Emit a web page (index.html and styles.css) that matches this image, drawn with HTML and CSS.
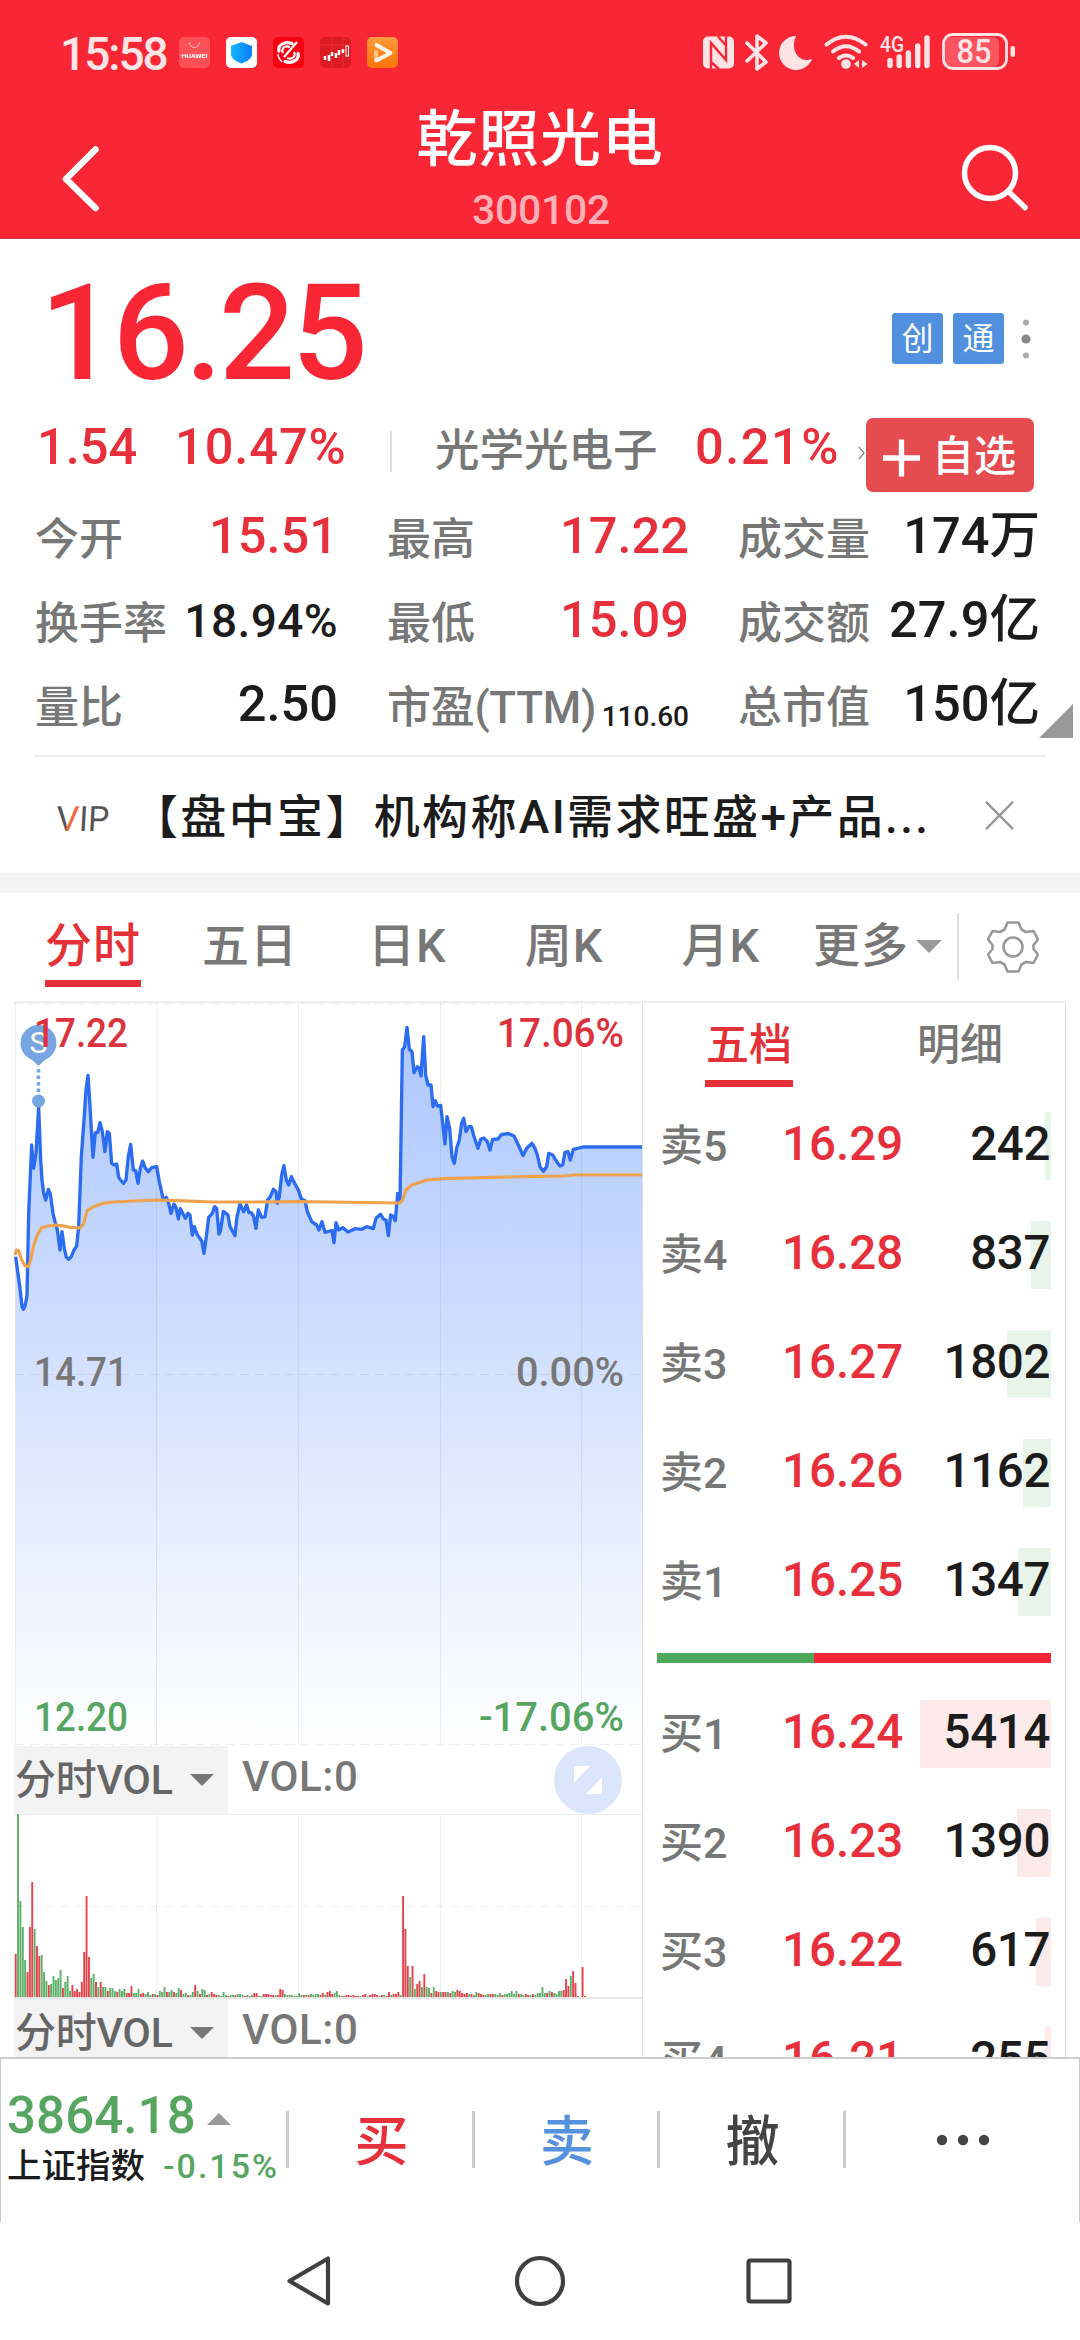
FILE: index.html
```html
<!DOCTYPE html>
<html lang="zh-CN">
<head>
<meta charset="utf-8">
<title>乾照光电 300102</title>
<link rel="stylesheet" href="styles.css">
</head>
<body>
<header class="header">
  <div class="status">
    <span class="clock">15:58</span>
    <div class="apps">
      <svg class="app" viewBox="0 0 31 31"><rect width="31" height="31" rx="5" fill="#ff5058"/><path d="M10.500 5.500a5 5 0 0 0 10 0" fill="none" stroke="#ffc0c0" stroke-width="1"/><text x="2.500" y="20.500" font-size="6" font-weight="700" fill="#fff" textLength="26" lengthAdjust="spacingAndGlyphs">HUAWEI</text></svg>
      <svg class="app" viewBox="0 0 31 31"><defs><linearGradient id="shield" x1="0" x2="1"><stop offset="0" stop-color="#14b4ff"/><stop offset="1" stop-color="#0a80fb"/></linearGradient></defs><rect width="31" height="31" rx="5" fill="#fff"/><path d="M15.500 5l10.500 4v8c0 4.500-5 7.500-10.500 9.500C10 24.500 5 21.500 5 17V9z" fill="url(#shield)"/></svg>
      <svg class="app" viewBox="0 0 31 31"><rect width="31" height="31" rx="5" fill="#f60012"/><path d="M19 6.500C11 3.500 4.500 9 6 14M12 24.500c8 3 14.500-2.500 13-8" fill="none" stroke="#fff" stroke-width="3.200" stroke-linecap="round"/><path d="M17 10c-6-2-9 2-7 6M14 21c6 2 9-2 7-6M24 5L11 20" fill="none" stroke="#fff" stroke-width="2.200"/><path d="M5 17c0 4 2 6 4 8" fill="none" stroke="#fff" stroke-width="1.500"/></svg>
      <svg class="app" viewBox="0 0 31 31"><rect width="31" height="31" rx="5" fill="#dc1c22"/><path d="M0 8h31M12 0v31M23 0v31" stroke="#e8343a" stroke-width=".8"/><path d="M5 19v4M9 18v6M12 15v4M16 16v5M19 13v5M23 12v4" stroke="#fff" stroke-width="2.500"/><rect x="26" y="9" width="2.500" height="10" fill="none" stroke="#fff"/></svg>
      <svg class="app" viewBox="0 0 31 31"><defs><linearGradient id="player" x2="0" y2="1"><stop offset="0" stop-color="#ff9a3e"/><stop offset="1" stop-color="#ff7408"/></linearGradient></defs><rect width="31" height="31" rx="5" fill="url(#player)"/><path d="M9 23V15" stroke="#ffc48a" stroke-width="4" stroke-linecap="round"/><path d="M9.500 8l14 8-14 7.500" fill="none" stroke="#fff4e6" stroke-width="4" stroke-linecap="round" stroke-linejoin="round"/></svg>
    </div>
    <svg class="system" viewBox="700 30 320 44" fill="#ffe4e6">
      <rect x="703" y="36.500" width="31" height="32" rx="5"/>
      <path d="M711 69V43l15 17V36M718 36.500l8 9M711 62l8 7M726 60l-8-9" fill="none" stroke="#f92735" stroke-width="2.400"/>
      <path d="M747 43l19 19-9 7V36l9 7-19 18" fill="none" stroke="#ffe4e6" stroke-width="3.600" stroke-linejoin="round" stroke-linecap="round"/>
      <path d="M796 36a17 17 0 1 0 16 23c-14 5-22-10-16-23z"/>
      <g fill="none" stroke="#ffe4e6" stroke-width="4" stroke-linecap="round"><path d="M826.500 44.500q19.500-15.500 39 0M833 51.500q13-10.500 26 0M839 58q7-5 14 0"/></g>
      <circle cx="846" cy="64" r="4.800"/>
      <path d="M859 60v8l-5-4zM862 60v8l5.500-4z"/>
      <text x="880" y="51.500" font-size="22" font-weight="500" textLength="24" lengthAdjust="spacingAndGlyphs">4G</text>
      <path d="M890 60.500v5M899.200 57v8.500M908.400 53v12.500M917.700 46v19.500M927 38v27.500" stroke="#ffe4e6" stroke-width="5.400" stroke-linecap="round"/>
      <rect x="945" y="37" width="54" height="30" rx="6" fill="#fb5460"/>
      <rect x="943.500" y="34.500" width="63" height="34" rx="9" fill="none" stroke="#ffe4e6" stroke-width="2.800"/>
      <rect x="1010.500" y="46" width="4.500" height="11" rx="2"/>
      <text x="956.500" y="63" font-size="33" font-weight="500" textLength="35" lengthAdjust="spacingAndGlyphs">85</text>
    </svg>
  </div>
  <div class="navbar">
    <svg class="nav-icon" viewBox="0 0 70 70"><path d="M45.500 5.500L16 35l29.500 29" fill="none" stroke="#fff" stroke-width="6.500" stroke-linecap="round" stroke-linejoin="round"/></svg>
    <div class="title">
      <h1>乾照光电</h1>
      <span class="code">300102</span>
    </div>
    <svg class="nav-icon" viewBox="0 0 70 70"><g fill="none" stroke="#fff" stroke-width="5.500" stroke-linecap="round"><circle cx="30" cy="29" r="25.500"/><path d="M49 48l16 15.500"/></g></svg>
  </div>
</header>

<section class="quote">
  <div class="price-row">
    <span class="price">16.25</span>
    <div class="marks"><span class="chip">创</span><span class="chip">通</span><svg class="dots" viewBox="0 0 12 44"><circle cx="6" cy="5.500" r="3" fill="#aaa"/><circle cx="6" cy="22" r="4.600" fill="#888"/><circle cx="6" cy="38.500" r="3" fill="#aaa"/></svg></div>
  </div>
  <div class="change-row">
    <span class="num up delta">1.54</span>
    <span class="num up percent">10.47%</span>
    <i class="rule"></i>
    <span class="sector">光学光电子</span>
    <span class="num up sector-rate">0.21%</span>
    <svg class="chev" viewBox="0 0 8 14"><path d="M1 1l5 6-5 6" fill="none" stroke="#888" stroke-width="1.300"/></svg>
    <button class="add"><svg viewBox="0 0 38 38"><path d="M19 0v38M0 19h38" stroke="#fff" stroke-width="5.500"/></svg>自选</button>
  </div>
  <dl class="stats">
    <div class="stat"><dt>今开</dt><dd class="up">15.51</dd></div>
    <div class="stat"><dt>最高</dt><dd class="up">17.22</dd></div>
    <div class="stat"><dt>成交量</dt><dd>174万</dd></div>
    <div class="stat"><dt>换手率</dt><dd class="rate">18.94%</dd></div>
    <div class="stat"><dt>最低</dt><dd class="up">15.09</dd></div>
    <div class="stat"><dt>成交额</dt><dd>27.9亿</dd></div>
    <div class="stat"><dt>量比</dt><dd>2.50</dd></div>
    <div class="stat"><dt class="ttm">市盈(TTM)</dt><dd class="tiny">110.60</dd></div>
    <div class="stat"><dt>总市值</dt><dd>150亿</dd></div>
  </dl>
  <i class="corner"></i>
  <div class="news">
    <svg class="vip" viewBox="0 0 54 30"><defs><linearGradient id="vipv" x1="0" x2="1"><stop offset=".42" stop-color="#555"/><stop offset=".5" stop-color="#ee6b3d"/></linearGradient></defs><g font-size="35" transform="skewX(-3)"><text x="1" y="27.500" fill="url(#vipv)" textLength="23" lengthAdjust="spacingAndGlyphs">V</text><text x="24" y="27.500" fill="#555" textLength="30" lengthAdjust="spacingAndGlyphs">IP</text></g></svg>
    <p class="headline">【盘中宝】机构称AI需求旺盛+产品...</p>
    <svg class="close" viewBox="0 0 30 30"><path d="M1 1l28 28M29 1L1 29" stroke="#999" stroke-width="2.600"/></svg>
  </div>
</section>

<nav class="tabs">
  <span class="tab on">分时</span><span class="tab">五日</span><span class="tab">日K</span><span class="tab">周K</span><span class="tab">月K</span>
  <span class="tab more">更多<i class="caret"></i></span>
  <i class="tab-rule"></i>
  <svg class="gear" viewBox="-26 -26 52 52"><g fill="none" stroke="#999" stroke-width="2.600" stroke-linejoin="round"><path d="M-5.500-24.500H5.500L8.500-17.500L13-15L20.500-16L25-7.500L20.500-2V2L25 7.500L20.500 16L13 15L8.500 17.500L5.500 24.500H-5.500L-8.500 17.500L-13 15L-20.500 16L-25 7.500L-20.500 2V-2L-25-7.500L-20.500-16L-13-15L-8.500-17.500Z"/><circle r="9.500"/></g></svg>
</nav>

<main class="board">
  <div class="charts">
    <svg class="minute" viewBox="14 1003 628 743">
      <defs><linearGradient id="area" gradientUnits="userSpaceOnUse" x1="0" y1="12" x2="0" y2="2235"><stop offset="0" stop-color="#a9c4fe"/><stop offset="1" stop-color="#fff"/></linearGradient></defs>
      <g transform="translate(0 1000) scale(.33333)">
        <path id="fill" fill="url(#area)"/>
        <path id="line" fill="none" stroke="#2b6cf0" stroke-width="10" stroke-linejoin="round"/>
        <path fill="none" stroke="#eda34e" stroke-width="9.500" stroke-linejoin="round" d="M45 765L50 750L56 752L65 780L75 797L85 800L92 780L100 740L112 705L125 683L145 678L165 675L185 677L210 682L240 684L250 672L262 632L280 620L310 610L340 606L400 603L470 600L530 602L640 606L760 606L900 605L990 606L1200 609L1207 600L1218 570L1235 555L1255 549L1280 540L1330 536L1450 533L1600 529L1690 528L1720 525L1926 525"/>
      </g>
      <path class="grid" d="M15.500 1003V1745M156.500 1003V1745M298.500 1003V1745M440.500 1003V1745M581.500 1003V1745"/>
      <path class="grid dash" d="M15 1003.500H642M15 1374.500H642M15 1744.500H642"/>
      <g fill="#77a5e1"><circle cx="38.500" cy="1043" r="18"/><path d="M29 1057h19l-9.500 9z"/><circle cx="38.500" cy="1101" r="6.500"/><path d="M38.500 1069v24" stroke="#77a5e1" stroke-width="3.500" stroke-dasharray="3.500 3"/></g>
      <text x="29.500" y="1053" font-size="29" fill="#fff" textLength="18" lengthAdjust="spacingAndGlyphs">S</text>
      <g font-size="41" font-weight="500">
        <text class="c-up" x="34" y="1047" textLength="94" lengthAdjust="spacingAndGlyphs">17.22</text>
        <text class="c-up" x="497" y="1047" textLength="127" lengthAdjust="spacingAndGlyphs">17.06%</text>
        <text class="c-mid" x="34" y="1386" textLength="94" lengthAdjust="spacingAndGlyphs">14.71</text>
        <text class="c-mid" x="516" y="1386" textLength="108" lengthAdjust="spacingAndGlyphs">0.00%</text>
        <text class="c-down" x="34" y="1731" textLength="94" lengthAdjust="spacingAndGlyphs">12.20</text>
        <text class="c-down" x="479" y="1731" textLength="145" lengthAdjust="spacingAndGlyphs">-17.06%</text>
      </g>
    </svg>
    <div class="strip"><span class="pick">分时VOL<i class="caret"></i></span><span class="vol">VOL:0</span>
      <svg class="expand" viewBox="0 0 68 68"><circle cx="34" cy="34" r="34" fill="#dbe5fc"/><path d="M20 20h16L20 37zM48 31v17H32z" fill="#fff"/></svg>
    </div>
    <svg class="volume" viewBox="14 1814 628 185">
      <path class="grid" d="M14 1814.500H642M156.500 1815V1997M298.500 1815V1997M440.500 1815V1997M581.500 1815V1997"/>
      <path class="grid dash" d="M15 1906.500H642"/>
      <path d="M14 1998H642" stroke="#e6e6e6" stroke-width="2"/>
      <path id="vol-up" stroke="#e2434c" stroke-width="1.900"/>
      <path id="vol-down" stroke="#5cb068" stroke-width="1.900"/>
    </svg>
    <div class="strip"><span class="pick">分时VOL<i class="caret"></i></span><span class="vol">VOL:0</span></div>
  </div>

  <aside class="book">
    <div class="book-tabs"><span class="btab on">五档</span><span class="btab">明细</span></div>
    <div class="level sell"><span>卖5</span><b>16.29</b><em><i style="width:6px"></i>242</em></div>
    <div class="level sell"><span>卖4</span><b>16.28</b><em><i style="width:20px"></i>837</em></div>
    <div class="level sell"><span>卖3</span><b>16.27</b><em><i style="width:44px"></i>1802</em></div>
    <div class="level sell"><span>卖2</span><b>16.26</b><em><i style="width:28px"></i>1162</em></div>
    <div class="level sell"><span>卖1</span><b>16.25</b><em><i style="width:33px"></i>1347</em></div>
    <div class="ratio"><i style="width:157px"></i></div>
    <div class="level buy"><span>买1</span><b>16.24</b><em><i style="width:131px"></i>5414</em></div>
    <div class="level buy"><span>买2</span><b>16.23</b><em><i style="width:34px"></i>1390</em></div>
    <div class="level buy"><span>买3</span><b>16.22</b><em><i style="width:15px"></i>617</em></div>
    <div class="level buy"><span>买4</span><b>16.21</b><em><i style="width:6px"></i>255</em></div>
  </aside>
</main>

<footer class="trade">
  <div class="index">
    <div class="index-top"><span class="index-value">3864.18</span><i class="caret-up"></i></div>
    <div class="index-sub"><span class="index-name">上证指数</span><span class="index-rate">-0.15%</span></div>
  </div>
  <span class="act buy-act">买</span>
  <span class="act sell-act">卖</span>
  <span class="act undo-act">撤</span>
  <span class="act more-act"><svg class="ellipsis" viewBox="0 0 54 12"><g fill="#444"><circle cx="6" cy="6" r="5.200"/><circle cx="27" cy="6" r="5.200"/><circle cx="48" cy="6" r="5.200"/></g></svg></span>
</footer>
<div class="sysnav">
  <svg viewBox="0 0 1080 118"><g fill="none" stroke="#404040" stroke-width="4.200" stroke-linejoin="round"><path d="M289.500 59L328 36.500V81.500Z"/><circle cx="540" cy="59" r="23"/><rect x="748.500" y="38.500" width="41" height="41" rx="2"/></g></svg>
</div>
<script src="chart.js"></script>
</body>
</html>
```
FILE: styles.css
```css
* { box-sizing: border-box; }
body {
  margin: 0;
  width: 1080px;
  height: 2340px;
  overflow: hidden;
  background: #fff;
  font-family: Roboto, "Noto Sans CJK SC", sans-serif;
  color: #1c1c1c;
}
svg { display: block; flex: none; }
i, em { font-style: normal; }
p, h1, dl, dd { margin: 0; }

.header { height: 239px; background: #f92735; border-bottom: 1px solid #c4384a; color: #fff; }
.status { display: flex; align-items: center; height: 104px; padding-left: 60px; }
.clock { width: 119px; font-size: 46px; font-weight: 500; letter-spacing: -2px; line-height: 60px; padding-top: 3px; color: #ffe4e6; }
.apps { display: flex; gap: 16px; }
.app { width: 31px; height: 31px; }
.system { width: 320px; height: 44px; margin-left: 302px; }
.navbar { display: flex; justify-content: space-between; padding: 0 50px; }
.nav-icon { width: 70px; height: 70px; margin-top: 40px; }
.title { display: flex; flex-direction: column; align-items: center; }
.title h1 { padding-top: 4px; font-size: 61px; font-weight: 500; line-height: 64px; letter-spacing: .8px; }
.code { margin: 17px 0 0 2px; font-size: 41px; font-weight: 500; line-height: 42px; letter-spacing: -.3px; color: #ffb0b6; }

.quote { position: relative; height: 634px; }
.price-row { display: flex; justify-content: space-between; height: 169px; padding: 17px 48px 0 40px; }
.price { padding-top: 2px; font-size: 134px; font-weight: 500; line-height: 152px; letter-spacing: -3.500px; color: #f92735; }
.marks { display: flex; align-items: center; height: 165px; }
.chip { width: 51px; height: 51px; margin-right: 10px; border-radius: 3px; background: #5090de; color: #fff; font-size: 32px; line-height: 53px; text-align: center; }
.dots { width: 12px; height: 44px; margin-left: 6px; }

.up { color: #e8303c; }
.num { font-size: 50.600px; font-weight: 500; line-height: 78px; }
.change-row { display: flex; align-items: center; height: 78px; padding-left: 37px; }
.delta { width: 138px; }
.percent { width: 215px; letter-spacing: .9px; }
.rule { width: 2px; height: 41px; margin-top: 9px; background: #ddd; }
.sector { margin-left: 43px; width: 260px; font-size: 44.500px; font-weight: 500; line-height: 78px; padding-top: 7px; color: #777; }
.sector-rate { width: 163px; letter-spacing: 1.500px; }
.chev { width: 8px; height: 14px; margin-top: 12px; }
.add { display: flex; flex: none; align-items: center; gap: 12px; width: 168px; height: 74px; margin: 16px 0 0; padding: 4px 0 0 17px; border: 0; border-radius: 7px; background: #e54c50; color: #fff; font: 500 42px/70px Roboto, "Noto Sans CJK SC", sans-serif; white-space: nowrap; }
.add svg { width: 37px; height: 38px; margin-top: 2px; }

.stats { display: grid; grid-template-columns: 303px 302px 302px; column-gap: 49px; padding: 8px 0 0 35px; }
.stat { display: flex; justify-content: space-between; height: 84px; line-height: 84px; white-space: nowrap; }
.stat dt { padding-top: 4px; font-size: 44px; font-weight: 500; color: #777; }
.stat dd { font-size: 50.600px; font-weight: 500; }
.stat .rate { font-size: 46px; padding-top: 1px; letter-spacing: .4px; }
.stat .ttm { letter-spacing: -.3px; }
.stat .tiny { padding-top: 13px; font-size: 28px; }
.corner { position: absolute; left: 1039px; top: 465px; border-left: 34px solid transparent; border-bottom: 34px solid #999; }
.news { display: flex; align-items: center; height: 118px; margin: 9px 34px 0; border-top: 2px solid #eee; }
.vip { width: 54px; height: 30px; margin: 6px 0 0 22px; overflow: visible; }
.headline { width: 800px; margin-left: 22px; padding-top: 4px; font-size: 46px; font-weight: 500; letter-spacing: 2.350px; line-height: 60px; white-space: nowrap; }
.close { width: 29px; height: 29px; margin-left: 53px; }

.tabs { display: flex; height: 128px; border-top: 20px solid #f4f4f4; padding-left: 45px; }
.tab { flex: none; height: 94px; margin-right: 61px; padding-top: 19px; border-bottom: 7px solid transparent; font-size: 47px; line-height: 68px; font-weight: 500; letter-spacing: 1px; color: #777; white-space: nowrap; }
.tab:nth-child(3) { margin-left: 9px; }
.tab:nth-child(3), .tab:nth-child(4) { margin-right: 78px; }
.tab:nth-child(5) { margin-right: 53px; }
.tab.on { color: #e33137; border-color: #e33137; }
.caret { display: inline-block; border: 13px solid transparent; border-bottom: 0; border-top: 13px solid #999; }
.tab.more { display: flex; align-items: center; width: 130px; margin-right: 14px; gap: 7px; }
.tab-rule { flex: none; width: 2px; height: 67px; margin: 20px 28px 0 0; background: #ddd; }
.gear { width: 52px; height: 52px; margin-top: 28px; }

.board { display: flex; width: 1052px; height: 1056px; margin: 0 14px; border-top: 2px solid #eee; overflow: hidden; }
.charts { width: 628px; flex: none; }
.minute { width: 628px; height: 743px; }
.volume { width: 628px; height: 185px; }
.grid { fill: none; stroke: rgba(40, 50, 80, .08); stroke-width: 1; }
.dash { stroke-dasharray: 9 6; }
.c-up { fill: #dc323e; }
.c-mid { fill: #777; }
.c-down { fill: #56a662; }
.strip { display: flex; height: 68px; line-height: 62px; }
.pick { display: flex; flex: none; align-items: center; gap: 17px; width: 214px; height: 68px; padding: 0 0 0 1px; background: #f3f3f3; color: #666; font-size: 41px; font-weight: 500; letter-spacing: -.2px; white-space: nowrap; }
.pick .caret { border-width: 12px 12px 0; border-color: #777 transparent; }
.vol { flex: none; margin-left: 14px; font-size: 42px; font-weight: 500; color: #777; width: 312px; letter-spacing: .6px; }
.expand { width: 68px; height: 68px; }

.book { width: 424px; height: 1056px; border: solid #ddd; border-width: 0 1px; }
.book-tabs { display: flex; height: 84px; padding-left: 62px; margin-bottom: 5px; }
.btab { flex: none; height: 84px; width: 88px; margin-right: 123px; padding-top: 10px; border-bottom: 7px solid transparent; font-size: 43px; font-weight: 500; line-height: 64px; color: #777; text-align: center; white-space: nowrap; }
.btab.on { border-color: #e33137; color: #e33137; }
.level { display: grid; grid-template-columns: 121px 125px 1fr; height: 109px; padding: 20px 14px 0 17px; line-height: 64px; }
.level span { font-size: 43px; font-weight: 500; padding-top: 2px; color: #777; }
.level b { font-size: 47.500px; font-weight: 500; padding-left: 1px; color: #e8303c; }
.level em { position: relative; height: 68px; padding-right: 1px; font-size: 47.500px; font-weight: 500; letter-spacing: -.4px; text-align: right; }
.level em i { position: absolute; z-index: -1; right: 0; top: 0; height: 68px; }
.sell em i { background: #e8f3ea; }
.buy em i { background: #fceaeb; }
.ratio { height: 10px; margin: 16px 14px 17px 14px; background: #f92735; }
.ratio i { display: block; height: 10px; background: #4fa95d; }

.trade { display: grid; grid-template-columns: 285px 186px 185px 186px 1fr; height: 165px; border: solid #ccc; border-width: 2px 1px 0; background: #fff; }
.index { padding: 25px 0 0 6px; white-space: nowrap; }
.index-top { display: flex; align-items: center; height: 62px; }
.index-value { font-size: 51px; font-weight: 500; letter-spacing: .1px; color: #56a662; width: 200px; }
.caret-up { border: 12px solid transparent; border-top: 0; border-bottom: 12px solid #999; margin-top: 8px; }
.index-sub { display: flex; align-items: center; height: 40px; line-height: 40px; }
.index-name { font-size: 34.500px; width: 156px; font-weight: 500; }
.index-rate { font-size: 34px; font-weight: 500; letter-spacing: 2px; color: #56a662; }
.act { display: flex; align-items: center; justify-content: center; height: 57px; margin-top: 52px; padding: 6px 0 0 2px; border-left: 3px solid #ccc; font-size: 54px; font-weight: 500; color: #444; line-height: 57px; }
.more-act { padding: 0; }
.buy-act { color: #e8303c; }
.sell-act { color: #5591dc; }
.ellipsis { width: 54px; height: 12px; }
.sysnav { height: 118px; background: #fff; }
.sysnav svg { width: 1080px; height: 118px; }
```
FILE: chart.js
```javascript
// Intraday price: x,y pairs in the chart group's units.
const price = "47,770 53,815 60,865 66,920 70,928 75,918 81,888 86,640 95,435 98,480 101,505 108,460 116,320 122,480 126,540 131,580 137,600 145,568 151,582 159,640 165,665 172,690 180,750 186,695 193,745 199,772 206,778 214,770 222,750 230,738 236,680 244,470 252,360 258,270 264,226 270,320 279,472 286,398 293,398 300,368 307,395 315,455 322,395 328,400 335,490 342,495 350,492 356,532 363,542 371,550 378,540 385,470 392,433 400,510 407,512 414,550 421,505 428,483 435,503 445,515 455,503 470,500 478,545 490,600 499,592 506,610 513,640 522,612 528,622 535,657 541,626 556,655 564,640 570,645 577,705 583,680 592,705 605,722 612,760 619,710 626,652 637,640 644,620 650,625 657,702 662,690 670,634 684,645 690,680 705,707 711,650 720,612 731,635 740,615 747,638 754,638 761,650 768,685 775,630 785,652 795,650 803,600 811,590 820,568 828,575 832,610 838,590 845,525 852,497 859,540 866,555 874,530 884,550 895,570 905,598 915,602 922,635 935,665 950,675 957,690 966,665 975,697 990,693 996,692 1002,728 1008,668 1016,690 1028,683 1044,696 1065,686 1085,688 1100,680 1120,686 1128,655 1142,643 1150,657 1158,660 1165,707 1172,645 1180,650 1186,662 1193,580 1196,605 1200,600 1202,480 1207,150 1214,140 1221,82 1228,148 1236,155 1242,218 1252,200 1258,205 1263,228 1271,110 1277,225 1284,255 1293,255 1299,320 1306,302 1312,318 1322,316 1335,432 1341,350 1349,385 1356,470 1363,490 1370,445 1378,420 1385,370 1391,355 1398,395 1406,380 1414,380 1422,410 1434,445 1442,418 1452,414 1462,425 1470,450 1478,418 1494,417 1505,403 1525,401 1542,408 1555,435 1569,467 1580,445 1596,430 1605,445 1612,465 1620,500 1630,514 1640,500 1646,460 1658,465 1670,485 1680,498 1688,495 1695,457 1704,455 1711,480 1720,448 1750,441 1926,441";
document.getElementById("line").setAttribute("d", "M" + price.split(" ").join("L"));
document.getElementById("fill").setAttribute("d", "M" + price.split(" ").join("L") + "V2235H47Z");

// Volume per minute: r = up, g = down, followed by the bar height.
const volume = "r43 g183 g96 g70 g37 r25 r70 r115 g68 r51 r41 g42 g25 g16 r12 g13 g21 g17 g19 g27 r9 g15 g21 g6 r12 r6 r8 r5 r15 r45 r101 r40 g19 g23 r15 g10 r15 g10 g10 r6 g9 g9 g6 r5 g8 g6 g8 r4 r4 r11 g4 g4 g8 r3 r4 g3 g5 g2 r3 g3 r2 g6 g5 g10 r5 g5 g7 r5 g4 g9 r7 g3 g4 r2 g2 g5 r12 g6 r3 g8 g7 r2 g3 r5 r3 r2 g2 g1 g5 g2 r1 g2 g2 r2 g3 g3 g2 r1 g2 r1 g2 r4 r4 g1 g1 r3 r3 r3 r2 r2 g2 r2 r8 r7 g3 g2 g2 g2 g1 g1 g4 g2 r2 g2 r2 g3 g2 g3 g3 r2 r4 g2 r5 r6 r3 g4 g6 g2 r1 g1 r2 r2 r1 r2 r1 r1 g1 r2 r3 g1 r2 r3 r3 r2 g1 r2 g2 r1 r5 g2 r3 r3 r5 g2 r101 r68 r31 g20 r31 g8 r13 r16 g10 r23 g10 g9 r4 g10 r6 r5 g5 r5 r5 g5 r4 g6 g5 r7 r6 r4 r3 r4 g3 r3 g2 g5 r4 r3 r2 g2 g3 r3 r3 g3 g2 g4 r2 g3 g3 g4 g6 g3 g6 r3 g3 g2 r3 r2 g2 r3 g2 g4 g4 g10 g4 r4 g6 r5 g4 g3 g6 g6 r7 r18 r11 g21 r26 r14 r1 r0 r30 r1";
const paths = { r: "", g: "" };
volume.split(" ").forEach((bar, i) => {
  paths[bar[0]] += `M${(15.7 + i * 2.362).toFixed(2)} 1997v-${bar.slice(1)}`;
});
document.getElementById("vol-up").setAttribute("d", paths.r);
document.getElementById("vol-down").setAttribute("d", paths.g);
```
